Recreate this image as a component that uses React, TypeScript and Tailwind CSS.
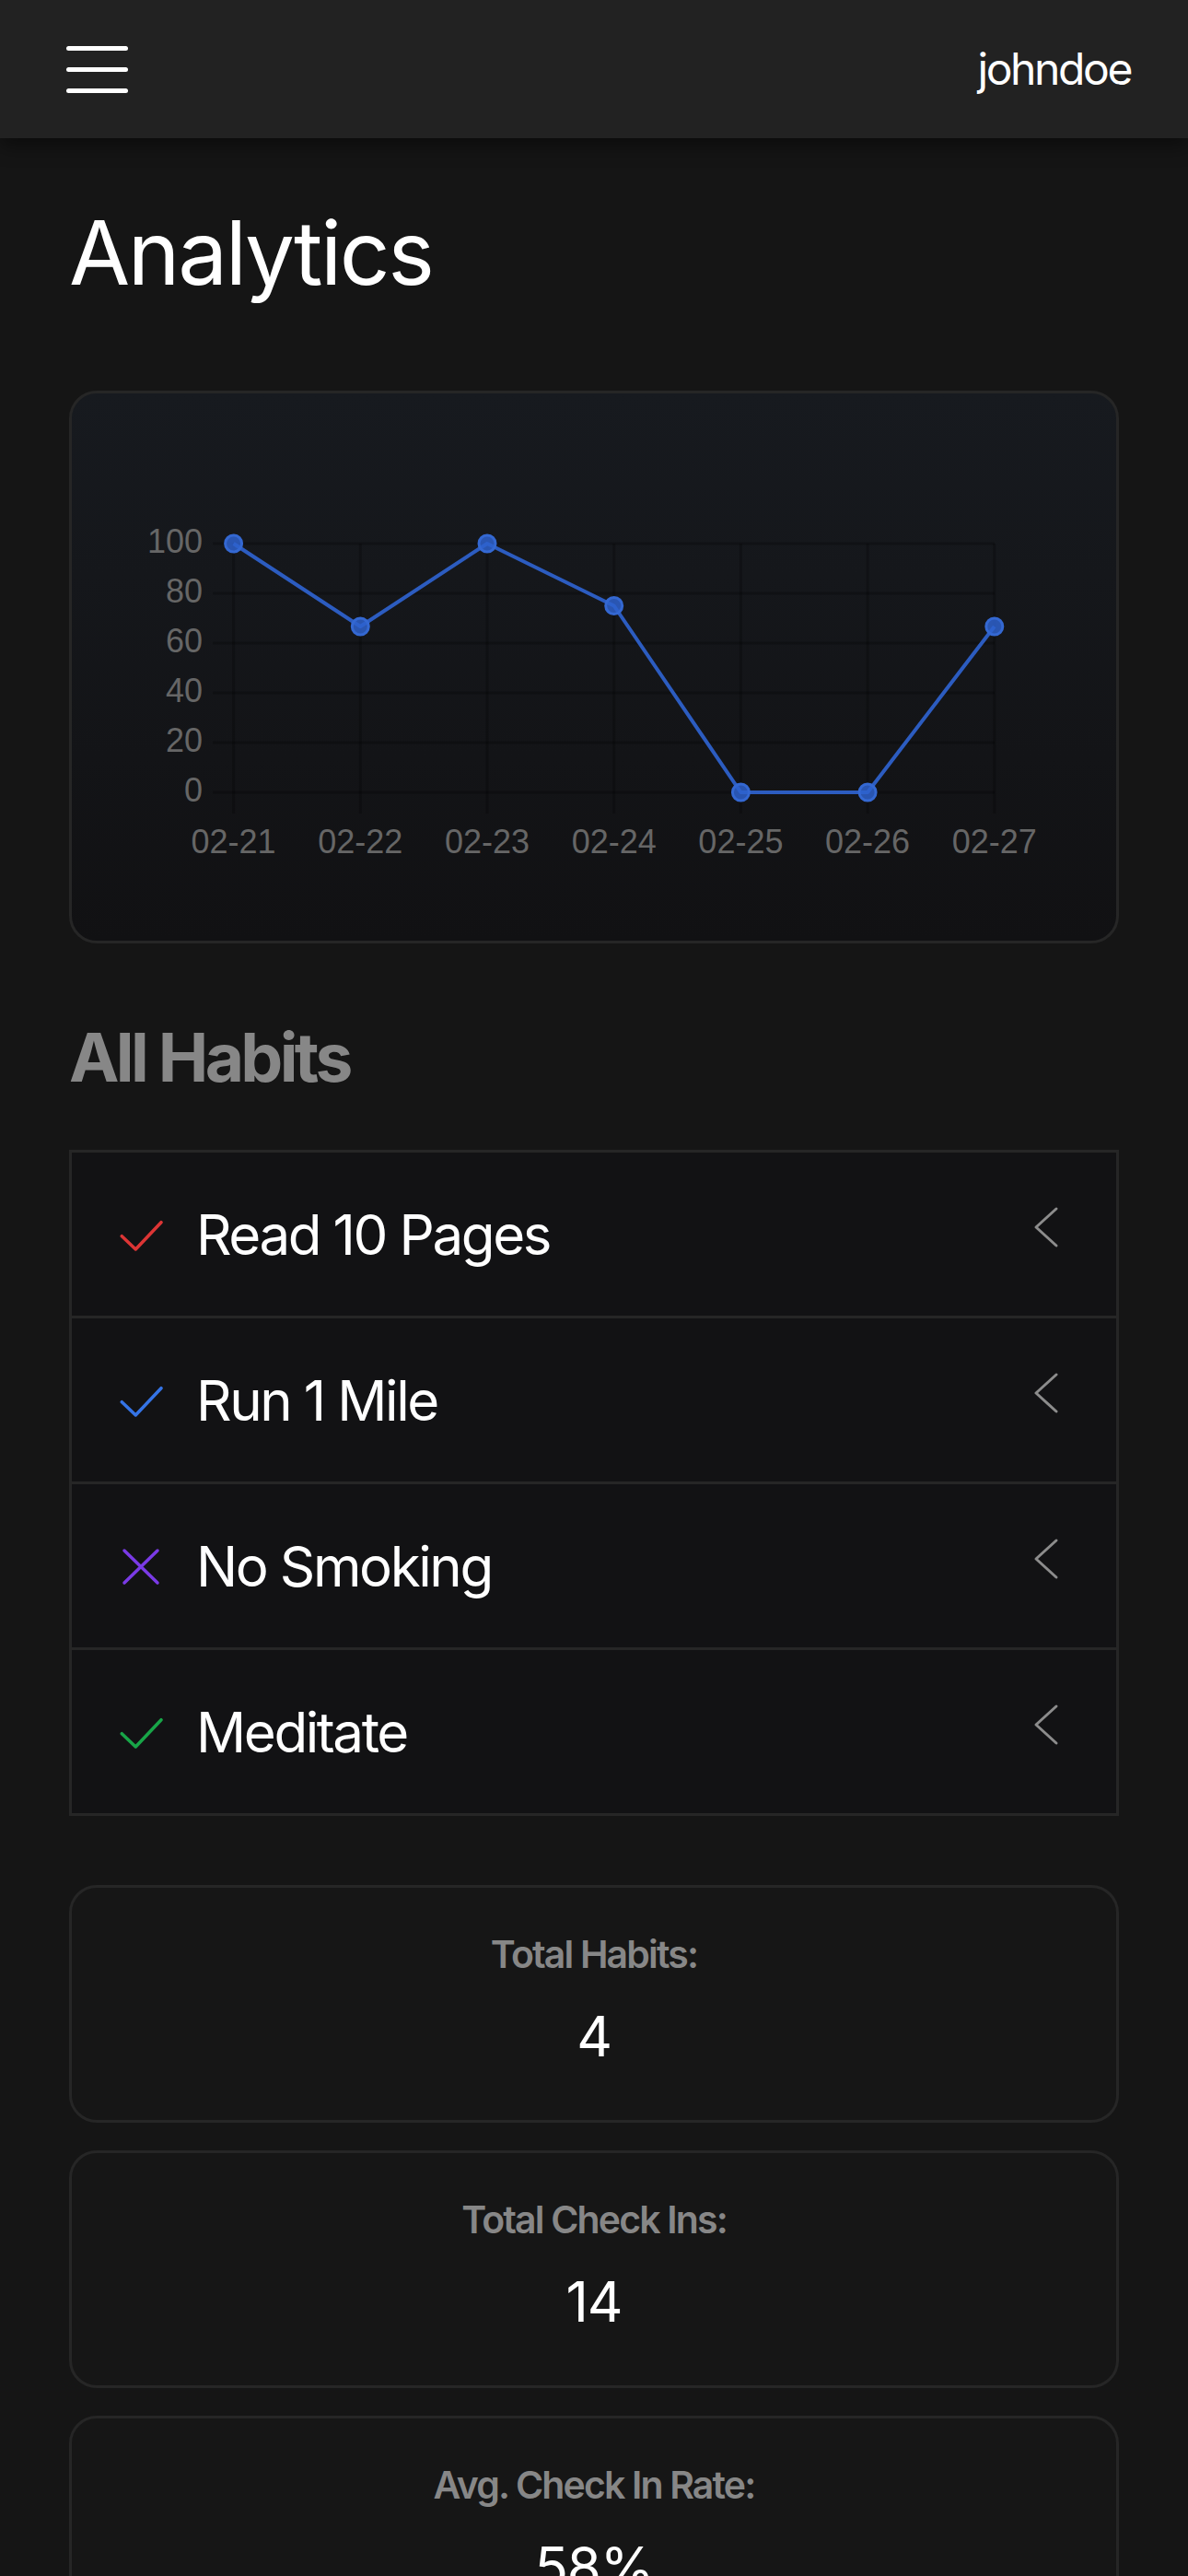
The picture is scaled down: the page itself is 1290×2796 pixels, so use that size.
import React from "react";

const DAYS = ["02-21", "02-22", "02-23", "02-24", "02-25", "02-26", "02-27"];
const RATES = [100, 66.67, 100, 75, 0, 0, 66.67];
const TICKS = [100, 80, 60, 40, 20, 0];

const HABITS = [
  { name: "Read 10 Pages", kind: "check", color: "#dc3535" },
  { name: "Run 1 Mile", kind: "check", color: "#3574e6" },
  { name: "No Smoking", kind: "cross", color: "#7a3ae6" },
  { name: "Meditate", kind: "check", color: "#18a548" },
];

const STATS = [
  { label: "Total Habits:", value: "4" },
  { label: "Total Check Ins:", value: "14" },
  { label: "Avg. Check In Rate:", value: "58%" },
];

// chart geometry, in px inside the card
const px = (i: number) => 175.6 + i * 137.7;
const py = (v: number) => 433 - v * 2.7;

function RateChart() {
  const line = RATES.map((v, i) => `${px(i)},${py(v)}`).join(" ");
  return (
    <svg width="1132" height="594" viewBox="0 0 1132 594" className="block">
      {TICKS.map((t) => (
        <line key={t} x1="153" x2="1002" y1={py(t)} y2={py(t)} stroke="rgba(0,0,0,0.22)" strokeWidth="3" />
      ))}
      {DAYS.map((d, i) => (
        <line key={d} x1={px(i)} x2={px(i)} y1="163" y2="456" stroke="rgba(0,0,0,0.22)" strokeWidth="3" />
      ))}
      {TICKS.map((t) => (
        <text
          key={t}
          x="142"
          y={py(t)}
          textAnchor="end"
          dominantBaseline="middle"
          fill="#666666"
          fontSize="36"
          fontFamily="'Liberation Sans', Arial, sans-serif"
        >
          {t}
        </text>
      ))}
      {DAYS.map((d, i) => (
        <text
          key={d}
          x={px(i)}
          y="499"
          textAnchor="middle"
          fill="#666666"
          fontSize="36"
          fontFamily="'Liberation Sans', Arial, sans-serif"
        >
          {d}
        </text>
      ))}
      <polyline points={line} fill="none" stroke="#2c5cc0" strokeWidth="4" strokeLinejoin="round" />
      {RATES.map((v, i) => (
        <circle key={i} cx={px(i)} cy={py(v)} r="9" fill="rgba(46,98,206,0.85)" stroke="#3468d2" strokeWidth="3" />
      ))}
    </svg>
  );
}

function HabitIcon({ kind, color }: { kind: string; color: string }) {
  return (
    <svg width="48" height="48" viewBox="0 0 48 48" className="shrink-0">
      {kind === "check" ? (
        <polyline
          points="3.3,25.7 18.3,40 46,10.7"
          fill="none"
          stroke={color}
          strokeWidth="3.5"
          strokeLinecap="round"
          strokeLinejoin="round"
        />
      ) : (
        <path d="M6 7 42 42M42 7 6 42" stroke={color} strokeWidth="3.5" strokeLinecap="round" />
      )}
    </svg>
  );
}

export default function App() {
  return (
    <div className="min-h-[2796px] bg-[#151515] font-[Inter,sans-serif] text-white">
      <header className="relative z-10 flex h-[150px] items-center justify-between bg-[#222222] pl-[72px] pr-[62px] shadow-[0_8px_20px_rgba(0,0,0,0.45)]">
        <div className="flex w-[67px] flex-col gap-[18px]">
          <span className="h-[5px] rounded-full bg-white" />
          <span className="h-[5px] rounded-full bg-white" />
          <span className="h-[5px] rounded-full bg-white" />
        </div>
        <span className="text-[48px] leading-none tracking-[-0.05em]">johndoe</span>
      </header>

      <main className="px-[75px] pt-[76px]">
        <h1 className="text-[96px] leading-none tracking-[-0.025em]">Analytics</h1>

        <section className="mt-[102px] h-[600px] overflow-hidden rounded-[30px] border-[3px] border-[#262626] bg-gradient-to-b from-[#171a1f] to-[#111113]">
          <RateChart />
        </section>

        <h2 className="mt-[87px] text-[73px] font-bold leading-none tracking-[-0.05em] text-[#878787]">All Habits</h2>

        <ul className="mt-[64px] border-[3px] border-[#262626] bg-[#121214]">
          {HABITS.map((h, i) => (
            <li
              key={h.name}
              className={`flex items-center pl-[51px] pr-[61px] ${i > 0 ? "h-[180px] border-t-[3px] border-[#262626]" : "h-[177px]"}`}
            >
              <HabitIcon kind={h.kind} color={h.color} />
              <span className="ml-[36px] flex-1 text-[60px] leading-none tracking-[-0.04em]">{h.name}</span>
              <svg width="32" height="48" viewBox="0 0 32 48" className="mb-[16px] shrink-0">
                <polyline
                  points="28,4 6,24 28,44"
                  fill="none"
                  stroke="#8c8c8c"
                  strokeWidth="3"
                  strokeLinecap="round"
                  strokeLinejoin="round"
                />
              </svg>
            </li>
          ))}
        </ul>

        <div className="mt-[75px] flex flex-col gap-[30px]">
          {STATS.map((s) => (
            <div
              key={s.label}
              className="flex h-[258px] flex-col items-center rounded-[30px] border-[3px] border-[#262626] bg-[#161616] pt-[42px]"
            >
              <p className="text-[41px] font-semibold leading-[60px] tracking-[-0.045em] text-[#878787]">{s.label}</p>
              <p className="mt-[17px] text-[60px] leading-[84px] tracking-[-0.02em]">{s.value}</p>
            </div>
          ))}
        </div>
      </main>
    </div>
  );
}
